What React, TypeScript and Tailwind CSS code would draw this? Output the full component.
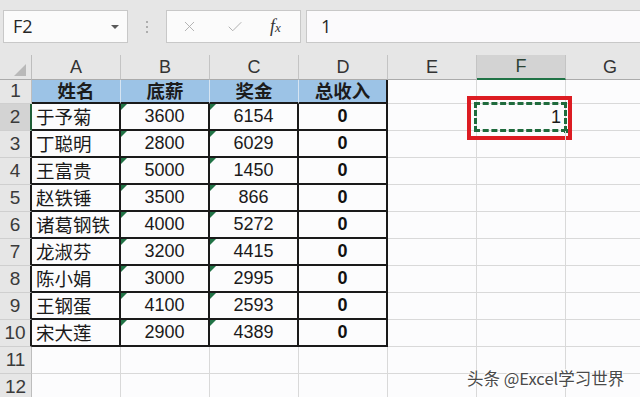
import { Check, X } from "lucide-react";

const COLS = ["A", "B", "C", "D", "E", "F", "G"];

const HEAD = ["姓名", "底薪", "奖金", "总收入"];

const ROWS: [string, string, string][] = [
  ["于予菊", "3600", "6154"],
  ["丁聪明", "2800", "6029"],
  ["王富贵", "5000", "1450"],
  ["赵铁锤", "3500", "866"],
  ["诸葛钢铁", "4000", "5272"],
  ["龙淑芬", "3200", "4415"],
  ["陈小娟", "3000", "2995"],
  ["王钢蛋", "4100", "2593"],
  ["宋大莲", "2900", "4389"],
];

const cjk = "font-['Noto_Sans_CJK_SC','Noto_Sans',sans-serif]";
const num = "font-['Liberation_Sans','Noto_Sans_CJK_SC',sans-serif]";

function GreenFlag() {
  return (
    <span className="absolute left-0 top-0 w-0 h-0 border-t-[6px] border-t-[#217346] border-r-[6px] border-r-transparent" />
  );
}

function RowHeader({ n, height }: { n: number; height: string }) {
  const selected = n === 2;
  const inTable = n >= 2 && n <= 10;
  return (
    <div
      className={`${height} w-[32px] shrink-0 flex items-center justify-center border-b border-b-[#cfcfcf] ${num} text-[19px] text-[#3a3a3a] ${
        selected
          ? "bg-[#d3d3d3] border-r-2 border-r-[#1e5e36]"
          : inTable
            ? "bg-[#e6e6e6] border-r-2 border-r-[#1a1a1a]"
            : "bg-[#e6e6e6] border-r border-r-[#bdbdbd]"
      }`}
    >
      {n}
    </div>
  );
}

function Toolbar() {
  return (
    <div className="h-[55px] bg-[#e6e6e6] flex items-start pt-[10px]">
      <div className="ml-[3px] w-[125px] h-[33px] bg-[#fbfbfb] border border-[#c8c8c8] flex items-center justify-between pl-[9px] pr-[8px]">
        <span className="font-['Open_Sans',sans-serif] text-[18px] text-[#262626]">F2</span>
        <span className="w-0 h-0 border-l-[4px] border-r-[4px] border-t-[4px] border-l-transparent border-r-transparent border-t-[#5a5a5a]" />
      </div>
      <div className="w-[38px] h-[33px] flex flex-col items-center justify-center gap-[3px]">
        <span className="w-[2px] h-[2px] rounded-full bg-[#9a9a9a]" />
        <span className="w-[2px] h-[2px] rounded-full bg-[#9a9a9a]" />
        <span className="w-[2px] h-[2px] rounded-full bg-[#9a9a9a]" />
      </div>
      <div className="w-[135px] h-[33px] bg-[#fbfbfb] border border-[#c8c8c8] flex items-center">
        <X size={17} strokeWidth={1.2} className="ml-[14px] text-[#a8a8a8]" />
        <Check size={18} strokeWidth={1.2} className="ml-[28px] text-[#a8a8a8]" />
        <span className="ml-[26px] font-['Liberation_Serif',serif] italic text-[18px] text-[#333]">
          f<span className="text-[13px]">x</span>
        </span>
      </div>
      <div className="ml-[5px] flex-1 h-[33px] bg-[#fbfafc] border border-r-0 border-[#c8c8c8] flex items-center pl-[14px]">
        <span className="font-['Open_Sans',sans-serif] text-[18px] text-[#262626]">1</span>
      </div>
    </div>
  );
}

function ColumnHeaders() {
  return (
    <div className="flex h-[25px] bg-[#e6e6e6]">
      <div className="w-[32px] shrink-0 relative border-r border-r-[#bdbdbd] border-b border-b-[#ababab]">
        <span className="absolute right-[5px] bottom-[3px] w-0 h-0 border-l-[12px] border-l-transparent border-b-[12px] border-b-[#b9b9b9]" />
      </div>
      {COLS.map((c) => (
        <div
          key={c}
          className={`w-[89px] shrink-0 flex items-center justify-center border-r border-r-[#c4c4c4] ${num} text-[18px] ${
            c === "F"
              ? "bg-[#d3d3d3] border-b-2 border-b-[#217346] text-[#2c4436]"
              : "border-b border-b-[#ababab] text-[#333]"
          }`}
        >
          {c}
        </div>
      ))}
    </div>
  );
}

function Sheet() {
  return (
    <div className="bg-[#fcfcfd]">
      {/* row 1: blue header */}
      <div className="flex">
        <RowHeader n={1} height="h-[24px]" />
        {HEAD.map((h, i) => (
          <div
            key={h}
            className={`w-[89px] h-[24px] shrink-0 flex items-center justify-center bg-[#9cc3e6] border-b-2 border-b-[#1a1a1a] ${cjk} font-bold text-[18.5px] text-[#1c1c1c] ${
              i === 3 ? "border-r-2 border-r-[#1a1a1a]" : "border-r border-r-[#d6e4f2]"
            }`}
          >
            {h}
          </div>
        ))}
        {["E", "F", "G"].map((c) => (
          <div key={c} className="w-[89px] h-[24px] shrink-0 border-r border-b border-[#d9d9d9]" />
        ))}
      </div>

      {ROWS.map(([name, base, bonus], i) => {
        const n = i + 2;
        return (
          <div key={n} className="flex">
            <RowHeader n={n} height="h-[27px]" />
            <div className={`w-[89px] h-[27px] shrink-0 flex items-center pl-[4px] border-r-2 border-b-2 border-[#1a1a1a] ${cjk} text-[18.5px] text-[#1a1a1a]`}>
              {name}
            </div>
            <div className={`relative w-[89px] h-[27px] shrink-0 flex items-center justify-center border-r-2 border-b-2 border-[#1a1a1a] ${num} text-[18px] text-[#1a1a1a]`}>
              <GreenFlag />
              {base}
            </div>
            <div className={`relative w-[89px] h-[27px] shrink-0 flex items-center justify-center border-r-2 border-b-2 border-[#1a1a1a] ${num} text-[18px] text-[#1a1a1a]`}>
              <GreenFlag />
              {bonus}
            </div>
            <div className={`w-[89px] h-[27px] shrink-0 flex items-center justify-center border-r-2 border-b-2 border-[#1a1a1a] ${num} font-bold text-[18px] text-[#111]`}>
              0
            </div>
            <div className="w-[89px] h-[27px] shrink-0 border-r border-b border-[#d9d9d9]" />
            <div className="relative w-[89px] h-[27px] shrink-0 flex items-center justify-end pr-[4px] border-r border-b border-[#d9d9d9]">
              {n === 2 && (
                <>
                  <span className={`${num} text-[18px] text-[#1a1a1a]`}>1</span>
                  <span className="absolute -left-[3px] -right-[2px] -top-[2px] -bottom-[2px] border-[3px] border-dashed border-[#1f6b3d]" />
                  <span className="absolute -right-[3px] -bottom-[3px] w-[4px] h-[4px] bg-[#1f6b3d]" />
                  <span className="absolute -left-[10px] -right-[7px] -top-[8px] -bottom-[10px] border-[4px] border-[#dc1c22]" />
                </>
              )}
            </div>
            <div className="w-[89px] h-[27px] shrink-0 border-r border-b border-[#d9d9d9]" />
          </div>
        );
      })}

      {[11, 12].map((n) => (
        <div key={n} className="flex">
          <RowHeader n={n} height="h-[27px]" />
          {COLS.map((c) => (
            <div key={c} className="w-[89px] h-[27px] shrink-0 border-r border-b border-[#d9d9d9]" />
          ))}
        </div>
      ))}
    </div>
  );
}

export default function App() {
  return (
    <div className="relative w-[640px] h-[397px] overflow-hidden bg-[#fcfcfd]">
      <Toolbar />
      <ColumnHeaders />
      <Sheet />
      <span className={`absolute left-[467px] top-[366px] ${cjk} text-[16.5px] text-[#4a4a4a] [text-shadow:1px_1px_0_#ffffff,-1px_-1px_0_#ffffff]`}>
        头条 @Excel学习世界
      </span>
    </div>
  );
}
